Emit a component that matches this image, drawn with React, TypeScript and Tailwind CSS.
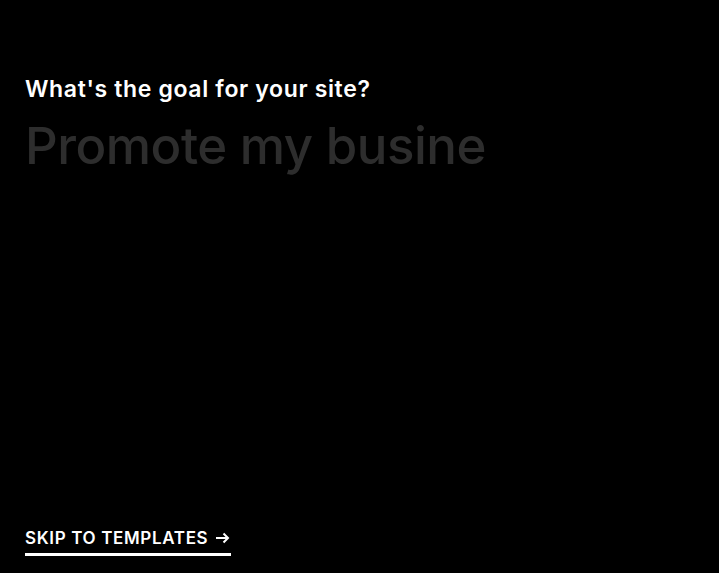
function ArrowIcon() {
  return (
    <svg width="15" height="12" viewBox="0 0 15 12" fill="none" stroke="currentColor" strokeWidth="2">
      <path d="M1 6h12" />
      <path d="M8.5 1.5 13 6l-4.5 4.5" />
    </svg>
  )
}

export default function App() {
  return (
    <div
      className="flex h-[573px] w-full flex-col bg-black px-[25px] text-white"
      style={{ fontFamily: 'Inter, "Liberation Sans", Arial, sans-serif' }}
    >
      <div className="pt-[75px]">
        <h1 className="text-[23px] font-semibold leading-[28px] tracking-[0.65px]">
          What's the goal for your site?
        </h1>
        <p className="mt-[14px] text-[51px] font-medium leading-[58px] tracking-[-0.5px] text-[#2d2d2d]">
          Promote my busine
        </p>
      </div>
      <div className="mt-auto pb-[17px]">
        <a
          href="#"
          className="inline-flex items-center gap-[7px] border-b-[3px] border-white pb-[5px] pr-[1px] text-[17px] font-semibold uppercase leading-[20px] tracking-[0.65px]"
        >
          Skip to templates <ArrowIcon />
        </a>
      </div>
    </div>
  )
}
